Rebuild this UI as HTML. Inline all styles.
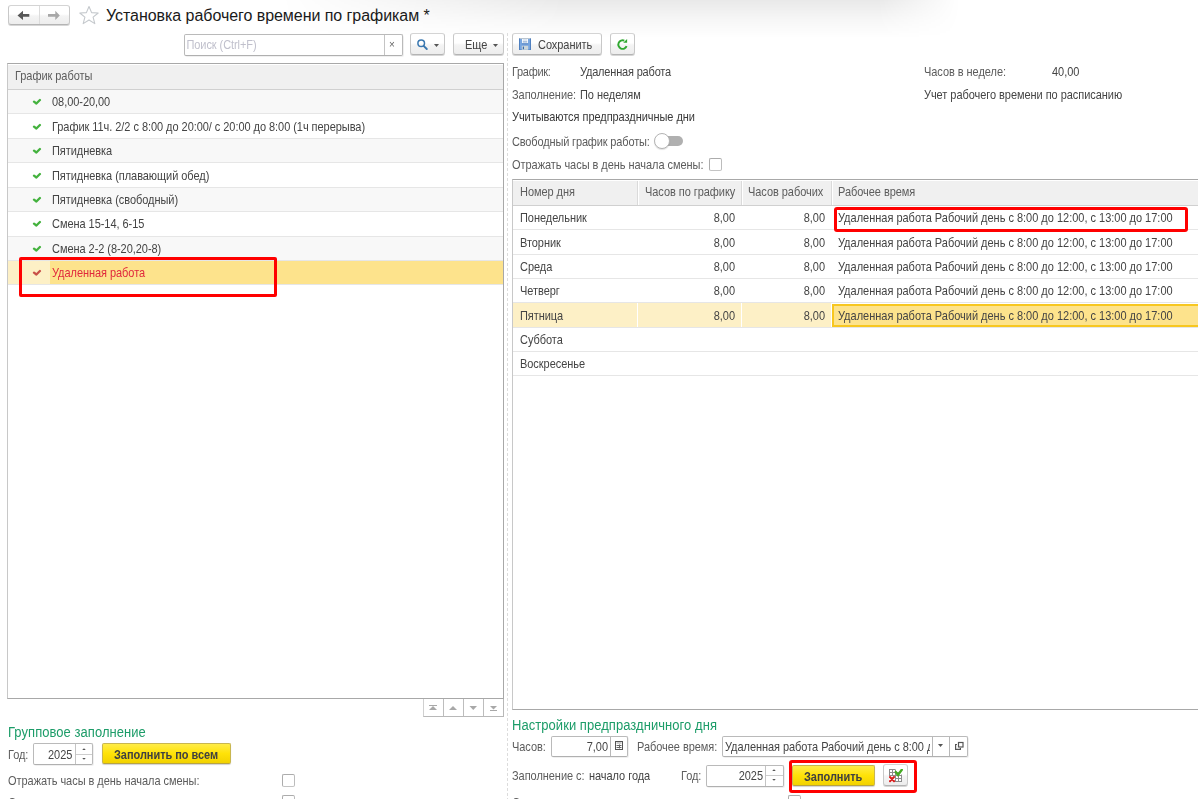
<!DOCTYPE html>
<html><head><meta charset="utf-8"><style>
*{box-sizing:border-box}
html,body{margin:0;padding:0}
body{width:1198px;height:799px;overflow:hidden;position:relative;background:#fff;font-family:"Liberation Sans",sans-serif;font-size:11px;color:#4d4d4d}
.a{position:absolute;white-space:nowrap}
.t{position:absolute;white-space:nowrap;line-height:13px;height:13px;transform:scaleY(1.12);transform-origin:0 3px;letter-spacing:-0.05px}
.btn{position:absolute;border:1px solid #c8c8c8;border-top-color:#d4d4d4;border-bottom-color:#b4b4b4;border-radius:3px;background:linear-gradient(#fff 0,#fff 45%,#f4f4f4 55%,#ededed 100%);box-shadow:0 1px 0 rgba(0,0,0,.16)}
.inp{position:absolute;border:1px solid #bababa;border-bottom-color:#b0b0b0;border-radius:2px;background:#fff;box-shadow:1px 1px 0 rgba(0,0,0,.06)}
.chk{position:absolute;width:13px;height:13px;border:1px solid #acacac;border-bottom-color:#c4c4c4;border-right-color:#bcbcbc;border-radius:2px;background:#fff}
.ybtn{position:absolute;border:1px solid #c8b650;border-bottom-color:#b8a440;border-radius:2px;background:linear-gradient(#ffec48 0%,#ffe208 50%,#f2d200 100%);box-shadow:0 1px 1px rgba(0,0,0,.18)}
.red{position:absolute;border:3px solid #ff0000;border-radius:3px}
.green{color:#2e9e5b;font-size:13px}
</style></head><body>
<div class="a" style="left:280px;top:0px;width:680px;height:38px;background:linear-gradient(rgba(0,0,0,.085),rgba(0,0,0,.03) 55%,rgba(0,0,0,0));-webkit-mask-image:linear-gradient(to right, transparent 0%, #000 42%, #000 88%, transparent 100%)"></div>
<div class="btn" style="left:8px;top:5px;width:62px;height:20px"></div>
<div class="a" style="left:39px;top:6px;width:1px;height:18px;background:#dcdcdc"></div>
<svg class="a" style="left:16px;top:9px" width="16" height="12" viewBox="0 0 16 12"><path d="M1.5 6.4 L7 1.8 L7 5 L13.3 5 L13.3 7.8 L7 7.8 L7 11 Z" fill="#585858"/></svg>
<svg class="a" style="left:46px;top:9px" width="16" height="12" viewBox="0 0 16 12"><path d="M13.8 6.4 L9.3 1.8 L9.3 5 L2 5 L2 7.8 L9.3 7.8 L9.3 11 Z" fill="#a8a8a8"/></svg>
<svg class="a" style="left:78px;top:5px" width="22" height="20" viewBox="0 0 22 20"><path d="M11 1.5 L13.6 7.6 L20.2 8 L15.1 12.2 L16.8 18.6 L11 15 L5.2 18.6 L6.9 12.2 L1.8 8 L8.4 7.6 Z" fill="none" stroke="#c4c8cc" stroke-width="1.1" stroke-linejoin="round"/></svg>
<div class="a" style="left:106px;top:6px;font-size:16px;line-height:20px;color:#1a1a1a;letter-spacing:-0.05px">Установка рабочего времени по графикам *</div>
<div class="inp" style="left:184px;top:34px;width:219px;height:22px"></div>
<div class="a" style="left:384px;top:35px;width:1px;height:20px;background:#c4c4c4"></div>
<div class="t" style="left:186.5px;top:38px;color:#c0c0cc;letter-spacing:-0.08px">Поиск (Ctrl+F)</div>
<div class="t" style="left:389px;top:37px;color:#666;font-size:10px">×</div>
<div class="btn" style="left:410px;top:33px;width:35px;height:22px"></div>
<svg class="a" style="left:416px;top:38px" width="14" height="14" viewBox="0 0 14 14"><circle cx="5.2" cy="5.3" r="3.3" fill="none" stroke="#3a78b0" stroke-width="1.5"/><path d="M7.6 7.8 L10.8 11" stroke="#3a78b0" stroke-width="1.9" stroke-linecap="round"/></svg>
<svg class="a" style="left:434px;top:44px" width="6" height="4"><path d="M0 0 H5 L2.5 3 Z" fill="#555"/></svg>
<div class="btn" style="left:453px;top:33px;width:51px;height:22px"></div>
<div class="t" style="left:465px;top:38px;color:#444">Еще</div>
<svg class="a" style="left:493px;top:44px" width="6" height="4"><path d="M0 0 H5 L2.5 3 Z" fill="#555"/></svg>
<div class="a" style="left:507px;top:33px;width:1px;height:770px;background:repeating-linear-gradient(#dcdcdc 0 3px,transparent 3px 5px)"></div>
<div class="btn" style="left:512px;top:33px;width:90px;height:22px"></div>
<svg class="a" style="left:519px;top:38px" width="12" height="12" viewBox="0 0 12 12"><rect x="0.5" y="0.5" width="11" height="11.5" fill="#78a6e0" stroke="#4f80c0" stroke-width="1"/><rect x="0.5" y="0" width="11" height="1" fill="#b8c4d0"/><rect x="3" y="1" width="6" height="4.2" fill="#fbfdff"/><rect x="3.8" y="1.6" width="4.4" height="0.8" fill="#b0c4dc"/><rect x="3.8" y="3.4" width="4.4" height="1" fill="#7a9cc8"/><rect x="2.8" y="5.4" width="6.4" height="1" fill="#5a88c4"/><rect x="2.8" y="7.8" width="6.4" height="4" fill="#ccd6da"/><rect x="3.8" y="8.6" width="1.2" height="2.6" fill="#3b6aa8"/></svg>
<div class="t" style="left:538px;top:38px;color:#444">Сохранить</div>
<div class="btn" style="left:610px;top:33px;width:25px;height:22px"></div>
<svg class="a" style="left:616px;top:38px" width="13" height="13" viewBox="0 0 13 13"><path d="M8.3 2.6 A4.3 4.3 0 1 0 10.6 8.2" fill="none" stroke="#30a830" stroke-width="1.9"/><path d="M7.2 4.7 L11.1 1 L11.1 4.8 Z" fill="#30a830"/></svg>
<div class="a" style="left:7px;top:63px;width:497px;height:636px;border:1px solid #a8a8a8;border-left-color:#c8c8c8;background:#fff"></div>
<div class="a" style="left:8px;top:64px;width:495px;height:1px;background:#fff"></div>
<div class="a" style="left:8px;top:65px;width:495px;height:24px;background:#f0f0f0"></div>
<div class="a" style="left:8px;top:89px;width:495px;height:1px;background:#d0d0d0"></div>
<div class="t" style="left:15px;top:69px;color:#5c5c5c">График работы</div>
<div class="a" style="left:8px;top:90px;width:495px;height:23px;background:#f8f8f8"></div>
<div class="a" style="left:8px;top:113px;width:495px;height:1px;background:#e6e6e6"></div>
<svg class="a" style="left:32px;top:97px" width="10" height="8" viewBox="0 0 10 8"><path d="M2 4.6 L4.4 6.5 L7.9 3.0" fill="none" stroke="#44b23e" stroke-width="2.3" stroke-linejoin="round" stroke-linecap="round"/></svg>
<div class="t" style="left:52px;top:95px;color:#444">08,00-20,00</div>
<div class="a" style="left:8px;top:138px;width:495px;height:1px;background:#e6e6e6"></div>
<svg class="a" style="left:32px;top:122px" width="10" height="8" viewBox="0 0 10 8"><path d="M2 4.6 L4.4 6.5 L7.9 3.0" fill="none" stroke="#44b23e" stroke-width="2.3" stroke-linejoin="round" stroke-linecap="round"/></svg>
<div class="t" style="left:52px;top:120px;color:#444">График 11ч. 2/2 с 8:00 до 20:00/ с 20:00 до 8:00 (1ч перерыва)</div>
<div class="a" style="left:8px;top:139px;width:495px;height:23px;background:#f8f8f8"></div>
<div class="a" style="left:8px;top:162px;width:495px;height:1px;background:#e6e6e6"></div>
<svg class="a" style="left:32px;top:146px" width="10" height="8" viewBox="0 0 10 8"><path d="M2 4.6 L4.4 6.5 L7.9 3.0" fill="none" stroke="#44b23e" stroke-width="2.3" stroke-linejoin="round" stroke-linecap="round"/></svg>
<div class="t" style="left:52px;top:144px;color:#444">Пятидневка</div>
<div class="a" style="left:8px;top:187px;width:495px;height:1px;background:#e6e6e6"></div>
<svg class="a" style="left:32px;top:171px" width="10" height="8" viewBox="0 0 10 8"><path d="M2 4.6 L4.4 6.5 L7.9 3.0" fill="none" stroke="#44b23e" stroke-width="2.3" stroke-linejoin="round" stroke-linecap="round"/></svg>
<div class="t" style="left:52px;top:169px;color:#444">Пятидневка (плавающий обед)</div>
<div class="a" style="left:8px;top:188px;width:495px;height:23px;background:#f8f8f8"></div>
<div class="a" style="left:8px;top:211px;width:495px;height:1px;background:#e6e6e6"></div>
<svg class="a" style="left:32px;top:195px" width="10" height="8" viewBox="0 0 10 8"><path d="M2 4.6 L4.4 6.5 L7.9 3.0" fill="none" stroke="#44b23e" stroke-width="2.3" stroke-linejoin="round" stroke-linecap="round"/></svg>
<div class="t" style="left:52px;top:193px;color:#444">Пятидневка (свободный)</div>
<div class="a" style="left:8px;top:236px;width:495px;height:1px;background:#e6e6e6"></div>
<svg class="a" style="left:32px;top:219px" width="10" height="8" viewBox="0 0 10 8"><path d="M2 4.6 L4.4 6.5 L7.9 3.0" fill="none" stroke="#44b23e" stroke-width="2.3" stroke-linejoin="round" stroke-linecap="round"/></svg>
<div class="t" style="left:52px;top:217px;color:#444">Смена 15-14, 6-15</div>
<div class="a" style="left:8px;top:237px;width:495px;height:23px;background:#f8f8f8"></div>
<div class="a" style="left:8px;top:260px;width:495px;height:1px;background:#e6e6e6"></div>
<svg class="a" style="left:32px;top:244px" width="10" height="8" viewBox="0 0 10 8"><path d="M2 4.6 L4.4 6.5 L7.9 3.0" fill="none" stroke="#44b23e" stroke-width="2.3" stroke-linejoin="round" stroke-linecap="round"/></svg>
<div class="t" style="left:52px;top:242px;color:#444">Смена 2-2 (8-20,20-8)</div>
<div class="a" style="left:8px;top:261px;width:42px;height:23px;background:#fdf0c6"></div>
<div class="a" style="left:50px;top:261px;width:453px;height:23px;background:#fde38c"></div>
<div class="a" style="left:8px;top:284px;width:495px;height:1px;background:#e6e6e6"></div>
<svg class="a" style="left:32px;top:268px" width="10" height="8" viewBox="0 0 10 8"><path d="M2 4.6 L4.4 6.5 L7.9 3.0" fill="none" stroke="#c85048" stroke-width="2.3" stroke-linejoin="round" stroke-linecap="round"/></svg>
<div class="t" style="left:52px;top:266px;color:#e0283c">Удаленная работа</div>
<div class="red" style="left:19px;top:257px;width:258px;height:40px;border-radius:2px"></div>
<div class="a" style="left:423px;top:699px;width:81px;height:18px;border:1px solid #b8b8b8;border-top:none;border-left-color:#d0d0d0;background:#fff"></div>
<div class="a" style="left:443px;top:699px;width:1px;height:17px;background:#bdbdbd"></div>
<div class="a" style="left:463px;top:699px;width:1px;height:17px;background:#bdbdbd"></div>
<div class="a" style="left:483px;top:699px;width:1px;height:17px;background:#bdbdbd"></div>
<svg class="a" style="left:423px;top:698px" width="81" height="20" viewBox="0 0 81 20"><g fill="#a8a8a8"><rect x="6" y="7" width="8" height="1"/><path d="M6 12 L10 8 L14 12 Z"/><path d="M26 12 L30 8 L34 12 Z"/><path d="M46.5 8 L54 8 L50.25 12 Z"/><path d="M67 8 L74 8 L70.5 11.5 Z"/><rect x="67" y="12" width="7" height="1"/></g></svg>
<div class="t" style="left:8px;top:727px;font-size:13px;line-height:15px;height:15px;top:724px;letter-spacing:0.05px;color:#1c9c68">Групповое заполнение</div>
<div class="t" style="left:8px;top:748px;color:#5c5c5c">Год:</div>
<div class="inp" style="left:33px;top:743px;width:60px;height:22px"></div>
<div class="a" style="left:75px;top:744px;width:1px;height:20px;background:#c4c4c4"></div>
<div class="a" style="left:76px;top:754px;width:16px;height:1px;background:#cdcdcd"></div>
<div class="t" style="left:48px;top:748px;color:#444">2025</div>
<svg class="a" style="left:81px;top:747px" width="6" height="15"><path d="M1.2 3 L3 1.2 L4.8 3 Z M1.2 11 L3 12.8 L4.8 11 Z" fill="#555"/></svg>
<div class="ybtn" style="left:102px;top:743px;width:129px;height:21px"></div>
<div class="t" style="left:114px;top:748px;font-weight:bold;color:#404040">Заполнить по всем</div>
<div class="t" style="left:8px;top:774px;color:#5c5c5c">Отражать часы в день начала смены:</div>
<div class="chk" style="left:282px;top:774px"></div>
<div class="chk" style="left:282px;top:795px"></div>
<div class="t" style="left:8px;top:796px;color:#5c5c5c">Отражать</div>
<div class="t" style="left:512px;top:65px;color:#5c5c5c;letter-spacing:-0.3px">График:</div>
<div class="t" style="left:580px;top:65px;color:#444;letter-spacing:-0.18px">Удаленная работа</div>
<div class="t" style="left:924px;top:65px;color:#5c5c5c">Часов в неделе:</div>
<div class="t" style="left:1052px;top:65px;color:#444">40,00</div>
<div class="t" style="left:512px;top:88px;color:#5c5c5c">Заполнение:</div>
<div class="t" style="left:580px;top:88px;color:#444">По неделям</div>
<div class="t" style="left:924px;top:88px;color:#444">Учет рабочего времени по расписанию</div>
<div class="t" style="left:512px;top:110px;color:#383838">Учитываются предпраздничные дни</div>
<div class="t" style="left:512px;top:135px;color:#5c5c5c;letter-spacing:-0.15px">Свободный график работы:</div>
<div class="a" style="left:662px;top:136px;width:21px;height:10px;background:#b0b0b0;border-radius:5px"></div>
<div class="a" style="left:654px;top:133px;width:16px;height:16px;background:#fff;border:1px solid #b4b4b4;border-radius:50%;box-shadow:0 1px 1px rgba(0,0,0,.12)"></div>
<div class="t" style="left:512px;top:158px;color:#5c5c5c;letter-spacing:-0.05px">Отражать часы в день начала смены:</div>
<div class="chk" style="left:709px;top:158px"></div>
<div class="a" style="left:512px;top:179px;width:700px;height:531px;border:1px solid #a8a8a8;border-left-color:#c8c8c8;background:#fff"></div>
<div class="a" style="left:513px;top:180px;width:700px;height:1px;background:#fff"></div>
<div class="a" style="left:513px;top:181px;width:700px;height:24px;background:#f0f0f0"></div>
<div class="a" style="left:513px;top:205px;width:700px;height:1px;background:#d0d0d0"></div>
<div class="a" style="left:637px;top:181px;width:1px;height:24px;background:#dadada"></div>
<div class="a" style="left:638px;top:181px;width:1px;height:24px;background:#fff"></div>
<div class="a" style="left:741px;top:181px;width:1px;height:24px;background:#dadada"></div>
<div class="a" style="left:742px;top:181px;width:1px;height:24px;background:#fff"></div>
<div class="a" style="left:831px;top:181px;width:1px;height:24px;background:#dadada"></div>
<div class="a" style="left:832px;top:181px;width:1px;height:24px;background:#fff"></div>
<div class="t" style="left:520px;top:185px;color:#5c5c5c">Номер дня</div>
<div class="t" style="left:645px;top:185px;color:#5c5c5c">Часов по графику</div>
<div class="t" style="left:748px;top:185px;color:#5c5c5c">Часов рабочих</div>
<div class="t" style="left:838px;top:185px;color:#5c5c5c">Рабочее время</div>
<div class="a" style="left:513px;top:229px;width:700px;height:1px;background:#e6e6e6"></div>
<div class="t" style="left:520px;top:211px;color:#444">Понедельник</div>
<div class="t" style="left:600px;width:135px;text-align:right;top:211px;color:#444">8,00</div>
<div class="t" style="left:700px;width:125px;text-align:right;top:211px;color:#444">8,00</div>
<div class="t" style="left:838px;top:211px;color:#444;letter-spacing:-0.01px">Удаленная работа Рабочий день с 8:00 до 12:00, с 13:00 до 17:00</div>
<div class="a" style="left:513px;top:254px;width:700px;height:1px;background:#e6e6e6"></div>
<div class="t" style="left:520px;top:236px;color:#444">Вторник</div>
<div class="t" style="left:600px;width:135px;text-align:right;top:236px;color:#444">8,00</div>
<div class="t" style="left:700px;width:125px;text-align:right;top:236px;color:#444">8,00</div>
<div class="t" style="left:838px;top:236px;color:#444;letter-spacing:-0.01px">Удаленная работа Рабочий день с 8:00 до 12:00, с 13:00 до 17:00</div>
<div class="a" style="left:513px;top:278px;width:700px;height:1px;background:#e6e6e6"></div>
<div class="t" style="left:520px;top:260px;color:#444">Среда</div>
<div class="t" style="left:600px;width:135px;text-align:right;top:260px;color:#444">8,00</div>
<div class="t" style="left:700px;width:125px;text-align:right;top:260px;color:#444">8,00</div>
<div class="t" style="left:838px;top:260px;color:#444;letter-spacing:-0.01px">Удаленная работа Рабочий день с 8:00 до 12:00, с 13:00 до 17:00</div>
<div class="a" style="left:513px;top:302px;width:700px;height:1px;background:#e6e6e6"></div>
<div class="t" style="left:520px;top:284px;color:#444">Четверг</div>
<div class="t" style="left:600px;width:135px;text-align:right;top:284px;color:#444">8,00</div>
<div class="t" style="left:700px;width:125px;text-align:right;top:284px;color:#444">8,00</div>
<div class="t" style="left:838px;top:284px;color:#444;letter-spacing:-0.01px">Удаленная работа Рабочий день с 8:00 до 12:00, с 13:00 до 17:00</div>
<div class="a" style="left:513px;top:303px;width:124px;height:24px;background:#fdf0c6"></div>
<div class="a" style="left:638px;top:303px;width:103px;height:24px;background:#fdf0c6"></div>
<div class="a" style="left:742px;top:303px;width:89px;height:24px;background:#fdf0c6"></div>
<div class="a" style="left:832px;top:304px;width:380px;height:23px;background:#fde38c;border:2px solid #f7c720"></div>
<div class="a" style="left:513px;top:327px;width:700px;height:1px;background:#e6e6e6"></div>
<div class="t" style="left:520px;top:309px;color:#444">Пятница</div>
<div class="t" style="left:600px;width:135px;text-align:right;top:309px;color:#444">8,00</div>
<div class="t" style="left:700px;width:125px;text-align:right;top:309px;color:#444">8,00</div>
<div class="t" style="left:838px;top:309px;color:#444;letter-spacing:-0.01px">Удаленная работа Рабочий день с 8:00 до 12:00, с 13:00 до 17:00</div>
<div class="a" style="left:513px;top:351px;width:700px;height:1px;background:#e6e6e6"></div>
<div class="t" style="left:520px;top:333px;color:#444">Суббота</div>
<div class="a" style="left:513px;top:375px;width:700px;height:1px;background:#e6e6e6"></div>
<div class="t" style="left:520px;top:357px;color:#444">Воскресенье</div>
<div class="red" style="left:834px;top:207px;width:354px;height:25px"></div>
<div class="t" style="left:512px;top:720px;font-size:13px;line-height:15px;height:15px;top:717px;letter-spacing:0.05px;color:#1c9c68">Настройки предпраздничного дня</div>
<div class="t" style="left:512px;top:740px;color:#5c5c5c">Часов:</div>
<div class="inp" style="left:551px;top:736px;width:77px;height:21px"></div>
<div class="a" style="left:610px;top:737px;width:1px;height:19px;background:#b8b8b8"></div>
<div class="t" style="left:560px;width:48px;text-align:right;top:740px;color:#444">7,00</div>
<svg class="a" style="left:615px;top:741px" width="8" height="9" viewBox="0 0 8 9"><rect x="0.5" y="0.5" width="7" height="8" fill="#fff" stroke="#555"/><rect x="1.5" y="1.5" width="5" height="1" fill="#999"/><path d="M1.5 4.5 H6.5 M1.5 6.5 H6.5 M4.5 3.5 V7.5" stroke="#666" stroke-width="1"/></svg>
<div class="t" style="left:637px;top:740px;color:#5c5c5c">Рабочее время:</div>
<div class="inp" style="left:722px;top:736px;width:246px;height:21px"></div>
<div class="a" style="left:932px;top:737px;width:1px;height:19px;background:#b8b8b8"></div>
<div class="a" style="left:949px;top:737px;width:1px;height:19px;background:#b8b8b8"></div>
<div class="t" style="left:725px;width:205px;overflow:hidden;letter-spacing:-0.05px;top:740px;color:#444">Удаленная работа Рабочий день с 8:00 до 12:00, с 13:00 до 17:00</div>
<svg class="a" style="left:938px;top:744px" width="6" height="4"><path d="M0 0 H5 L2.5 3 Z" fill="#555"/></svg>
<svg class="a" style="left:953px;top:740px" width="12" height="12" viewBox="0 0 12 12"><rect x="5.5" y="2.5" width="4.5" height="4.5" fill="none" stroke="#555" stroke-width="1.2"/><path d="M4 4.5 H2.6 V9.4 H7.4 V8" fill="none" stroke="#555" stroke-width="1.2"/></svg>
<div class="t" style="left:512px;top:769px;color:#5c5c5c">Заполнение с:</div>
<div class="t" style="left:589px;top:769px;color:#444">начало года</div>
<div class="t" style="left:681px;top:769px;color:#5c5c5c">Год:</div>
<div class="inp" style="left:706px;top:765px;width:78px;height:22px"></div>
<div class="a" style="left:765px;top:766px;width:1px;height:20px;background:#c4c4c4"></div>
<div class="a" style="left:766px;top:775px;width:17px;height:1px;background:#cdcdcd"></div>
<div class="t" style="left:700px;width:63px;text-align:right;top:769px;color:#444">2025</div>
<svg class="a" style="left:771px;top:768px" width="6" height="15"><path d="M1.2 3 L3 1.2 L4.8 3 Z M1.2 11 L3 12.8 L4.8 11 Z" fill="#555"/></svg>
<div class="red" style="left:789px;top:760px;width:128px;height:33px"></div>
<div class="ybtn" style="left:792px;top:765px;width:83px;height:21px"></div>
<div class="t" style="left:804px;top:770px;font-weight:bold;color:#404040">Заполнить</div>
<div class="btn" style="left:883px;top:764px;width:25px;height:22px"></div>
<svg class="a" style="left:889px;top:769px" width="14" height="14" viewBox="0 0 14 14"><rect x="0" y="0" width="13" height="13" fill="#8c8c8c"/><g fill="#fff"><rect x="1" y="1" width="2" height="2"/><rect x="4" y="1" width="2" height="2"/><rect x="7" y="1" width="2" height="2"/><rect x="10" y="1" width="2" height="2"/><rect x="1" y="4" width="2" height="2"/><rect x="4" y="4" width="2" height="2"/><rect x="7" y="4" width="2" height="2"/><rect x="10" y="4" width="2" height="2"/><rect x="1" y="7" width="2" height="2"/><rect x="4" y="7" width="2" height="2"/><rect x="7" y="7" width="2" height="2"/><rect x="10" y="7" width="2" height="2"/><rect x="1" y="10" width="2" height="2"/><rect x="4" y="10" width="2" height="2"/><rect x="7" y="10" width="2" height="2"/><rect x="10" y="10" width="2" height="2"/></g><path d="M6 0 L13 0 L13 6 Z" fill="#fff"/><path d="M0 7 L6 7 L6 13 L0 13 Z" fill="#fff"/><path d="M6.8 3 L9 6 L12.8 0.8" stroke="#44aa22" stroke-width="2.3" fill="none" stroke-linecap="round"/><path d="M1 8 L5 12.2 M5 8 L1 12.2" stroke="#d82020" stroke-width="2.1" stroke-linecap="round"/></svg>
<div class="chk" style="left:788px;top:795px"></div>
<div class="t" style="left:512px;top:796px;color:#5c5c5c">Отражать</div>
</body></html>
